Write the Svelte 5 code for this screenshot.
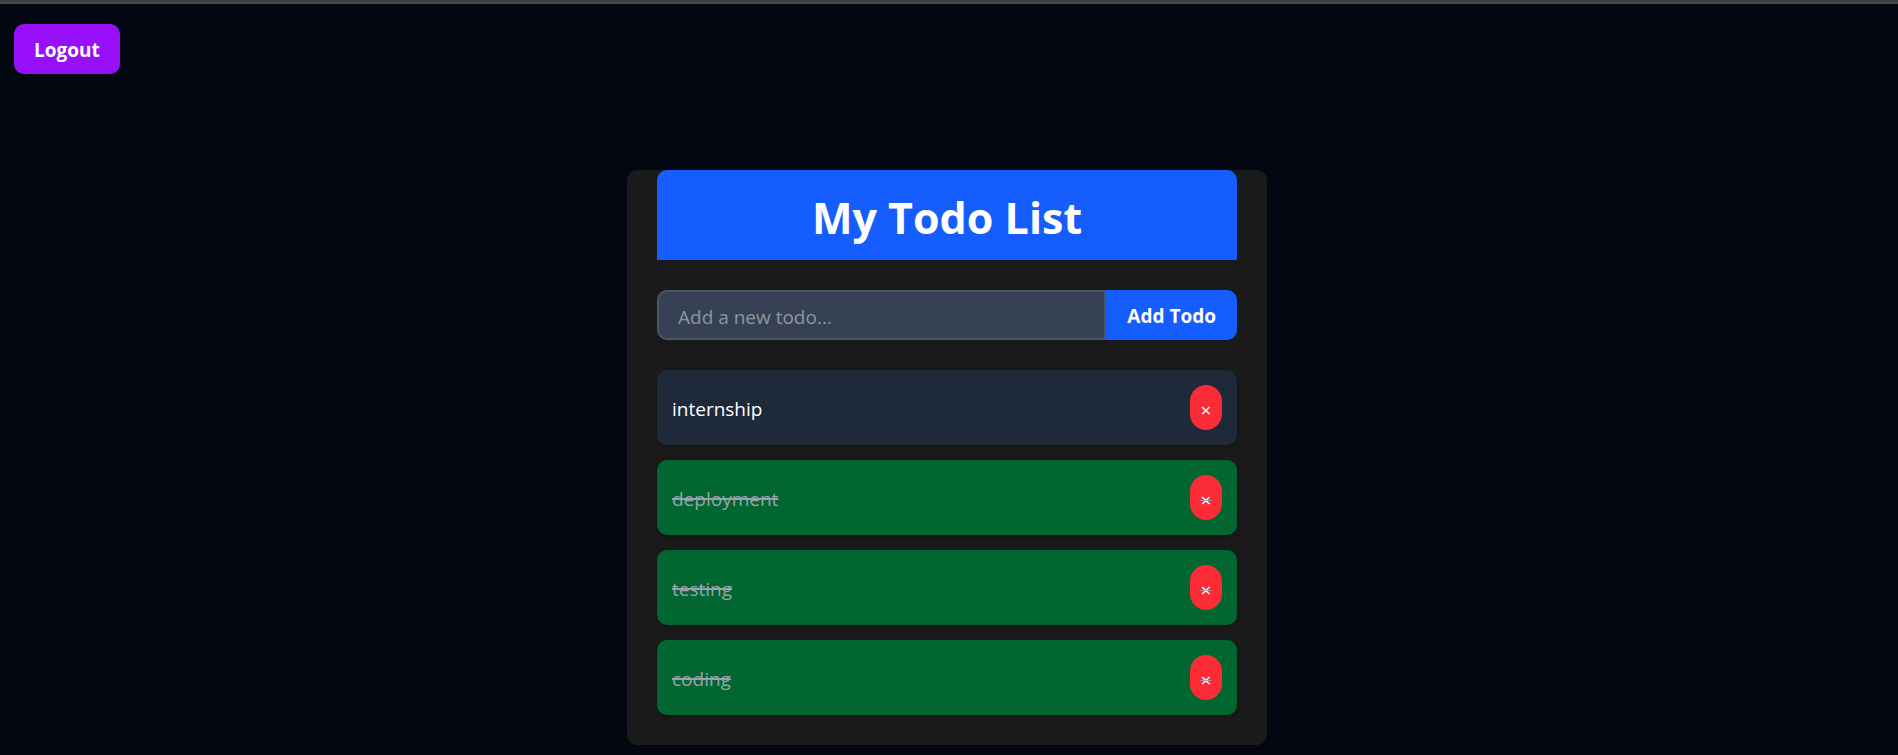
<script>
  let todos = $state([
    { id: 1, text: 'internship', done: false },
    { id: 2, text: 'deployment', done: true },
    { id: 3, text: 'testing', done: true },
    { id: 4, text: 'coding', done: true }
  ]);
  let draft = $state('');

  function add(event) {
    event.preventDefault();
    const text = draft.trim();
    if (!text) return;
    todos.push({ id: Date.now(), text, done: false });
    draft = '';
  }

  function remove(id) {
    todos = todos.filter((todo) => todo.id !== id);
  }
</script>

<div class="page">
  <header>
    <button class="logout" type="button">Logout</button>
  </header>
  <main>
    <section class="card">
      <h1>My Todo List</h1>
      <form onsubmit={add}>
        <input type="text" aria-label="New todo" placeholder="Add a new todo..." bind:value={draft} />
        <button class="add" type="submit">Add Todo</button>
      </form>
      <ul>
        {#each todos as todo (todo.id)}
          <li class:done={todo.done}>
            <span class="text">{todo.text}</span>
            <button class="delete" type="button" aria-label="Delete {todo.text}" onclick={() => remove(todo.id)}>
              <span class="cross">×</span>
            </button>
          </li>
        {/each}
      </ul>
    </section>
  </main>
</div>

<style>
  :global(body) {
    margin: 0;
    background: #030712;
  }

  .page {
    box-sizing: border-box;
    min-height: 100vh;
    border-top: 2px solid #3c3c3a;
    background: #030712;
    color: #fff;
    font-family: 'Segoe UI', 'Open Sans', 'Noto Sans', sans-serif;
    font-size: 19px;
    line-height: 30px;
  }

  header {
    border-top: 2px solid #474a48;
    padding: 20px 14px 0;
  }

  button {
    border: 0;
    color: #fff;
    font: inherit;
    cursor: pointer;
  }

  .logout,
  .add {
    height: 50px;
    padding: 2px 20px 0;
    font-weight: 700;
  }

  .logout {
    display: block;
    border-radius: 10px;
    background: #9810fa;
  }

  main {
    display: flex;
    justify-content: center;
    padding: 96px 4px 10px 0;
  }

  .card {
    box-sizing: border-box;
    width: 100%;
    max-width: 640px;
    padding: 0 30px 30px;
    border-radius: 10px;
    background: #1a1a1a;
  }

  h1 {
    margin: 0;
    padding: 23px 20px 17px;
    border-radius: 10px 10px 0 0;
    background: #155dfc;
    font-size: 43px;
    font-weight: 700;
    line-height: 50px;
    text-align: center;
  }

  form {
    display: flex;
    margin: 30px 0;
  }

  input {
    box-sizing: border-box;
    flex: 1;
    min-width: 0;
    height: 50px;
    padding: 4px 20px 0 19px;
    border: 2px solid #4a5565;
    border-radius: 10px 0 0 10px;
    background: #364153;
    color: #fff;
    font: inherit;
  }

  input::placeholder {
    color: #8f959e;
    opacity: 1;
  }

  .add {
    padding: 2px 21px 0;
    border-radius: 0 10px 10px 0;
    background: #155dfc;
  }

  ul {
    display: grid;
    gap: 15px;
    margin: 0;
    padding: 0;
    list-style: none;
  }

  li {
    display: flex;
    align-items: center;
    justify-content: space-between;
    padding: 15px;
    border-radius: 10px;
    background: #1e2939;
    box-shadow: 0 2px 4px rgb(0 0 0 / 20%);
  }

  li.done {
    background: #016630;
  }

  .text {
    padding-top: 2px;
  }

  .done .text {
    color: #99a1af;
    text-decoration: line-through 2px;
  }

  .delete {
    display: flex;
    align-items: center;
    justify-content: center;
    width: 32px;
    height: 45px;
    padding: 4px 0 0;
    border-radius: 16px;
    background: #fb2c36;
  }

  .cross {
    font-size: 19px;
    line-height: 30px;
  }

  .done .cross {
    text-decoration: line-through 1px #99a1af;
  }
</style>
